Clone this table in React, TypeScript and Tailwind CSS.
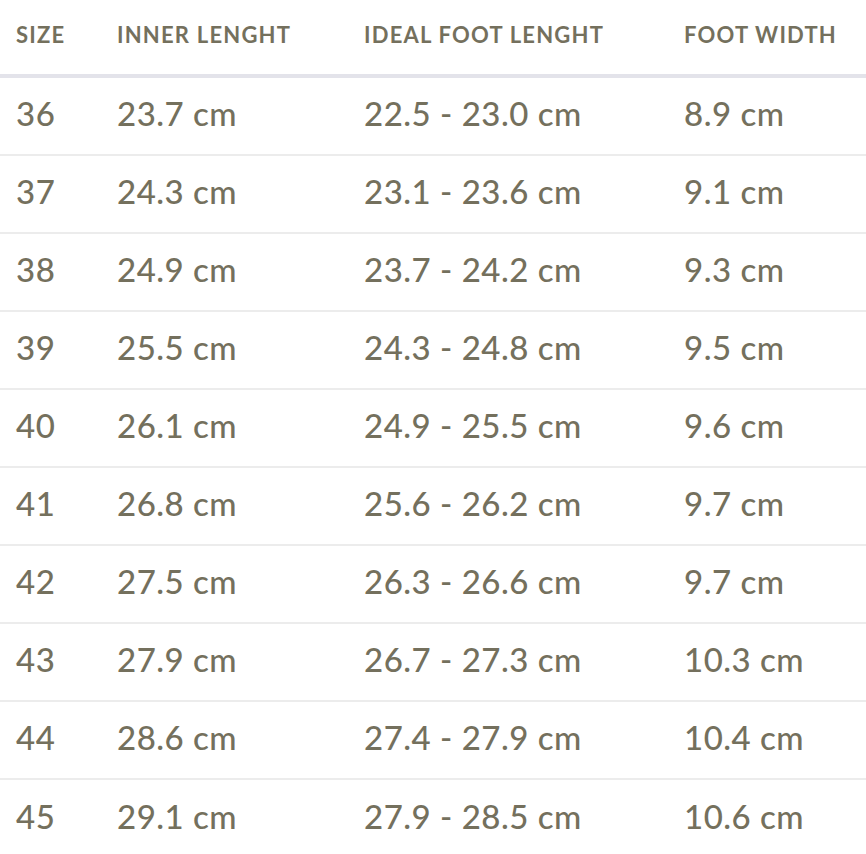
const rows = [
  ["36", "23.7 cm", "22.5 - 23.0 cm", "8.9 cm"],
  ["37", "24.3 cm", "23.1 - 23.6 cm", "9.1 cm"],
  ["38", "24.9 cm", "23.7 - 24.2 cm", "9.3 cm"],
  ["39", "25.5 cm", "24.3 - 24.8 cm", "9.5 cm"],
  ["40", "26.1 cm", "24.9 - 25.5 cm", "9.6 cm"],
  ["41", "26.8 cm", "25.6 - 26.2 cm", "9.7 cm"],
  ["42", "27.5 cm", "26.3 - 26.6 cm", "9.7 cm"],
  ["43", "27.9 cm", "26.7 - 27.3 cm", "10.3 cm"],
  ["44", "28.6 cm", "27.4 - 27.9 cm", "10.4 cm"],
  ["45", "29.1 cm", "27.9 - 28.5 cm", "10.6 cm"],
];

const headers = ["SIZE", "INNER LENGHT", "IDEAL FOOT LENGHT", "FOOT WIDTH"];

export default function App() {
  return (
    <div className="w-[866px] bg-white text-[#74705d] font-['Lato',sans-serif]">
      {/* Header */}
      <div className="grid grid-cols-[101px_247px_320px_1fr] pl-4 h-[78px] items-center border-b-4 border-[#e3e3ea]">
        {headers.map((h) => (
          <div key={h} className="text-[22px] font-bold tracking-[1.2px] -mt-1.5">
            {h}
          </div>
        ))}
      </div>

      {/* Rows */}
      {rows.map((row, i) => (
        <div
          key={row[0]}
          className={`grid grid-cols-[101px_247px_320px_1fr] pl-4 h-[78px] items-center ${
            i < rows.length - 1 ? "border-b-2 border-[#ececec]" : ""
          }`}
        >
          {row.map((cell, j) => (
            <div key={j} className="text-[33px] font-medium tracking-[0.5px] -mt-1">
              {cell}
            </div>
          ))}
        </div>
      ))}
    </div>
  );
}
